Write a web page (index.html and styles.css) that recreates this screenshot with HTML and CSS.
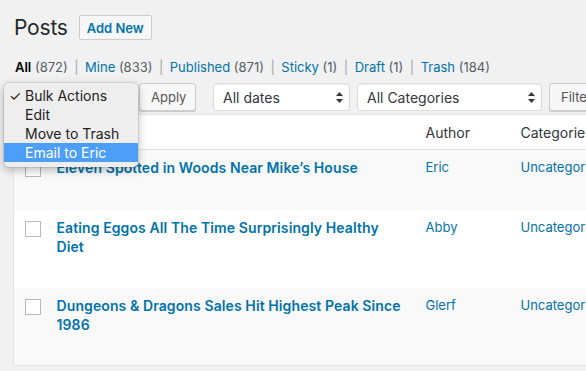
FILE: index.html
```html
<!DOCTYPE html>
<html>
<head>
<meta charset="utf-8">
<link rel="stylesheet" href="styles.css">
</head>
<body>
<div class="wrap">
  <div class="head">
    <h1 class="title">Posts</h1>
    <a class="add-new">Add New</a>
  </div>
  <ul class="subsub">
    <li><b class="current">All</b> <span class="count">(872)</span><span class="sep">|</span></li>
    <li><a>Mine <span class="count">(833)</span></a><span class="sep">|</span></li>
    <li><a>Published <span class="count">(871)</span></a><span class="sep">|</span></li>
    <li><a>Sticky <span class="count">(1)</span></a><span class="sep">|</span></li>
    <li><a>Draft <span class="count">(1)</span></a><span class="sep">|</span></li>
    <li><a>Trash <span class="count">(184)</span></a></li>
  </ul>
  <div class="toolbar">
    <div class="select bulk">Bulk Actions</div>
    <button class="btn apply">Apply</button>
    <div class="select dates"><span>All dates</span><svg class="arrows" width="7" height="11" viewBox="0 0 7 11"><path d="M3.5 0L7 4H0z M3.5 11L0 7h7z" fill="#32373c"/></svg></div>
    <div class="select cats"><span>All Categories</span><svg class="arrows" width="7" height="11" viewBox="0 0 7 11"><path d="M3.5 0L7 4H0z M3.5 11L0 7h7z" fill="#32373c"/></svg></div>
    <button class="btn filter">Filter</button>
  </div>
  <table class="posts">
    <colgroup><col class="c-cb"><col class="c-title"><col class="c-author"><col class="c-cats"></colgroup>
    <thead>
      <tr><th></th><th></th><th>Author</th><th>Categories</th></tr>
    </thead>
    <tbody>
      <tr class="row short alt">
        <td><span class="cb"></span></td>
        <td><a class="row-title">Eleven Spotted in Woods Near Mike’s House</a></td>
        <td><a>Eric</a></td>
        <td><a>Uncategorized</a></td>
      </tr>
      <tr class="row tall">
        <td><span class="cb"></span></td>
        <td><a class="row-title">Eating Eggos All The Time Surprisingly Healthy Diet</a></td>
        <td><a>Abby</a></td>
        <td><a>Uncategorized</a></td>
      </tr>
      <tr class="row tall alt">
        <td><span class="cb"></span></td>
        <td><a class="row-title">Dungeons &amp; Dragons Sales Hit Highest Peak Since 1986</a></td>
        <td><a>Glerf</a></td>
        <td><a>Uncategorized</a></td>
      </tr>
    </tbody>
  </table>
  <ul class="menu">
    <li class="item"><span class="check">✓</span>Bulk Actions</li>
    <li class="item">Edit</li>
    <li class="item">Move to Trash</li>
    <li class="item hl">Email to Eric</li>
  </ul>
</div>
</body>
</html>
```
FILE: styles.css
```css
* { box-sizing: border-box; }
html, body { margin: 0; padding: 0; }
body {
  background: #f1f1f1;
  font-family: Inter, Roboto, "Liberation Sans", sans-serif;
  color: #32373c;
  width: 586px;
  height: 371px;
  overflow: hidden;
}
a { color: #0073aa; text-decoration: none; }
.wrap { position: relative; padding: 15px 0 0 13px; width: 900px; }
.head { display: flex; align-items: center; height: 25px; }
.title { margin: 0 0 0 1px; font-size: 21px; font-weight: 400; line-height: 25px; color: #23282d; letter-spacing: -0.2px; }
.add-new {
  margin-left: 11px;
  height: 25px;
  width: 73px;
  display: flex; align-items: center; justify-content: center;
  border: 1px solid #ccc;
  border-radius: 2px;
  background: #f7f7f7;
  font-size: 13px;
  font-weight: 600;
  color: #0073aa;
}
.subsub {
  list-style: none; margin: 17px 0 0 2px; padding: 0;
  display: flex; font-size: 13px; line-height: 20px; height: 20px;
}
.subsub .current { color: #000; font-weight: 600; }
.count { color: #555d66; }
.subsub a .count { color: #555d66; }
.sep { color: #a0a5aa; margin: 0 6.5px; }
.toolbar { display: flex; margin-top: 6px; height: 28px; }
.select {
  flex-shrink: 0;
  height: 28px;
  background: #fff;
  border: 1px solid #ddd;
  border-radius: 4px;
  font-size: 14px;
  color: #32373c;
  display: flex; align-items: center; justify-content: space-between;
  padding: 0 6px 0 9px;
  box-shadow: inset 0 1px 2px rgba(0,0,0,.07);
}
.bulk { width: 122px; margin-left: 2px; border-color: #5b9dd9; }
.dates { width: 137px; margin-left: 17px; }
.cats { width: 185px; margin-left: 7px; }
.btn {
  flex-shrink: 0;
  height: 28px;
  font-family: inherit;
  font-size: 13px;
  color: #555;
  background: #f7f7f7;
  border: 1px solid #ccc;
  border-radius: 3px;
  box-shadow: 0 1px 0 #ccc;
  padding: 0 11px;
}
.apply { margin-left: 2px; width: 57px; }
.filter { margin-left: 7px; width: 60px; text-align: left; }
.posts {
  margin-top: 3px;
  border-collapse: collapse;
  table-layout: fixed;
  width: 760px;
  background: #fff;
  border: 1px solid #e5e5e5;
}
.c-cb { width: 34px; }
.c-title { width: 368px; }
.c-author { width: 95px; }
.c-cats { width: 263px; }
thead th {
  height: 35px;
  text-align: left;
  font-weight: 400;
  font-size: 14px;
  color: #32373c;
  padding: 0 10px;
  border-bottom: 1px solid #e1e1e1;
}
.row td { vertical-align: top; padding: 8px 10px 0; font-size: 13px; line-height: 19px; }
.row td:first-child { padding-left: 11px; }
.row td:nth-child(2) { padding-left: 9px; }
.row.short { height: 60px; }
.row.tall { height: 78px; }
.row.alt { background: #f9f9f9; }
.cb {
  display: block;
  width: 16px; height: 16px;
  margin-top: 3px;
  border: 1px solid #b4b9be;
  background: #fff;
}
.row-title { font-size: 14px; font-weight: 600; line-height: 19px; display: block; letter-spacing: 0.1px; }
.menu {
  position: absolute;
  left: 4px; top: 83px;
  width: 134px;
  margin: 0;
  padding: 3px 0 5px;
  list-style: none;
  background: #eeeeee;
  border-radius: 5px;
  box-shadow: 0 0 0 1px rgba(0,0,0,.08), 0 3px 10px rgba(0,0,0,.28);
  font-size: 14px;
  color: #222;
}
.item { height: 19px; line-height: 19px; padding-left: 21px; position: relative; }
.check { position: absolute; left: 5px; }
.item.hl { background: #4c9ef8; color: #fff; }
```
